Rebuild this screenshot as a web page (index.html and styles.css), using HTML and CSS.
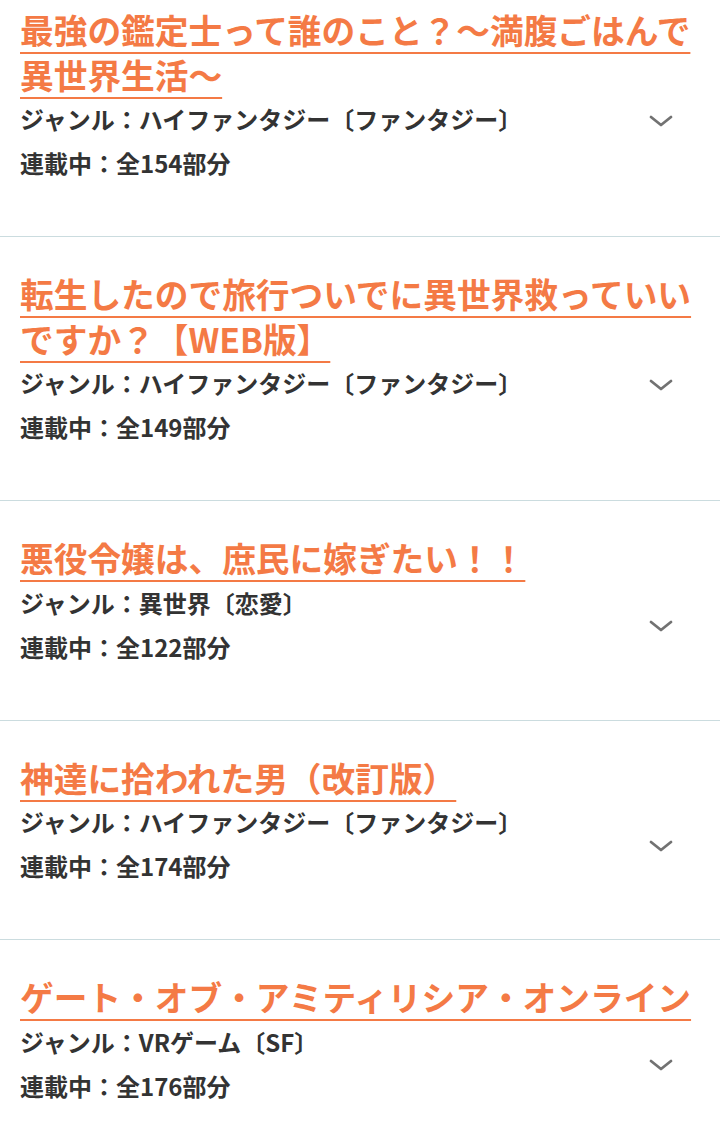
FILE: index.html
```html
<!DOCTYPE html>
<html lang="ja">
<head>
    <meta charset="UTF-8">
    <meta name="viewport" content="width=device-width, initial-scale=1.0">
    <title>小説一覧</title>
    <link rel="stylesheet" href="styles.css">
</head>
<body>
    <div class="novel-list">
        <div class="novel">
            <a class="novel-title" href="#">最強の鑑定士って誰のこと？〜満腹ごはんで異世界生活〜</a>
            <p class="novel-genre">ジャンル：ハイファンタジー〔ファンタジー〕</p>
            <p class="novel-count">連載中：全154部分</p>
            <span class="toggle"><svg width="24" height="14" viewBox="0 0 24 14"><polyline points="2,3 12,11 22,3"/></svg></span>
        </div>
        <div class="novel">
            <a class="novel-title" href="#">転生したので旅行ついでに異世界救っていいですか？【WEB版】</a>
            <p class="novel-genre">ジャンル：ハイファンタジー〔ファンタジー〕</p>
            <p class="novel-count">連載中：全149部分</p>
            <span class="toggle"><svg width="24" height="14" viewBox="0 0 24 14"><polyline points="2,3 12,11 22,3"/></svg></span>
        </div>
        <div class="novel">
            <a class="novel-title" href="#">悪役令嬢は、庶民に嫁ぎたい！！</a>
            <p class="novel-genre">ジャンル：異世界〔恋愛〕</p>
            <p class="novel-count">連載中：全122部分</p>
            <span class="toggle"><svg width="24" height="14" viewBox="0 0 24 14"><polyline points="2,3 12,11 22,3"/></svg></span>
        </div>
        <div class="novel">
            <a class="novel-title" href="#">神達に拾われた男（改訂版）</a>
            <p class="novel-genre">ジャンル：ハイファンタジー〔ファンタジー〕</p>
            <p class="novel-count">連載中：全174部分</p>
            <span class="toggle"><svg width="24" height="14" viewBox="0 0 24 14"><polyline points="2,3 12,11 22,3"/></svg></span>
        </div>
        <div class="novel">
            <a class="novel-title" href="#">ゲート・オブ・アミティリシア・オンライン</a>
            <p class="novel-genre">ジャンル：VRゲーム〔SF〕</p>
            <p class="novel-count">連載中：全176部分</p>
            <span class="toggle"><svg width="24" height="14" viewBox="0 0 24 14"><polyline points="2,3 12,11 22,3"/></svg></span>
        </div>
    </div>
</body>
</html>
```

FILE: styles.css
```css
body {
    font-family: "Noto Sans CJK JP", sans-serif;
    margin: 0;
    background-color: #fff;
    color: #333;
}

.novel-list {
    width: 100%;
}

.novel {
    display: grid;
    grid-template-columns: 1fr 60px;
    padding: 35px 20px 51px;
    border-bottom: 1px solid #cbdcdf;
}

.novel:first-child {
    padding-top: 8px;
}

.novel-title {
    grid-column: 1 / 3;
    grid-row: 1;
    font-size: 33.7px;
    line-height: 44.5px;
    font-weight: 700;
    color: #f47a45;
    text-decoration: underline;
    text-decoration-thickness: 2px;
    text-underline-offset: 8px;
}

.novel-genre, .novel-count {
    grid-column: 1;
    margin: 0;
    font-size: 24px;
    line-height: 44px;
    font-weight: 700;
}

.novel-genre {
    grid-row: 2;
}

.novel-count {
    grid-row: 3;
}

.toggle {
    grid-column: 2;
    grid-row: 1 / 4;
    align-self: center;
    justify-self: start;
    margin: 48px 0 0 9px;
    display: flex;
}

.toggle polyline {
    fill: none;
    stroke: #727272;
    stroke-width: 2.8;
    stroke-linecap: round;
    stroke-linejoin: round;
}
```
